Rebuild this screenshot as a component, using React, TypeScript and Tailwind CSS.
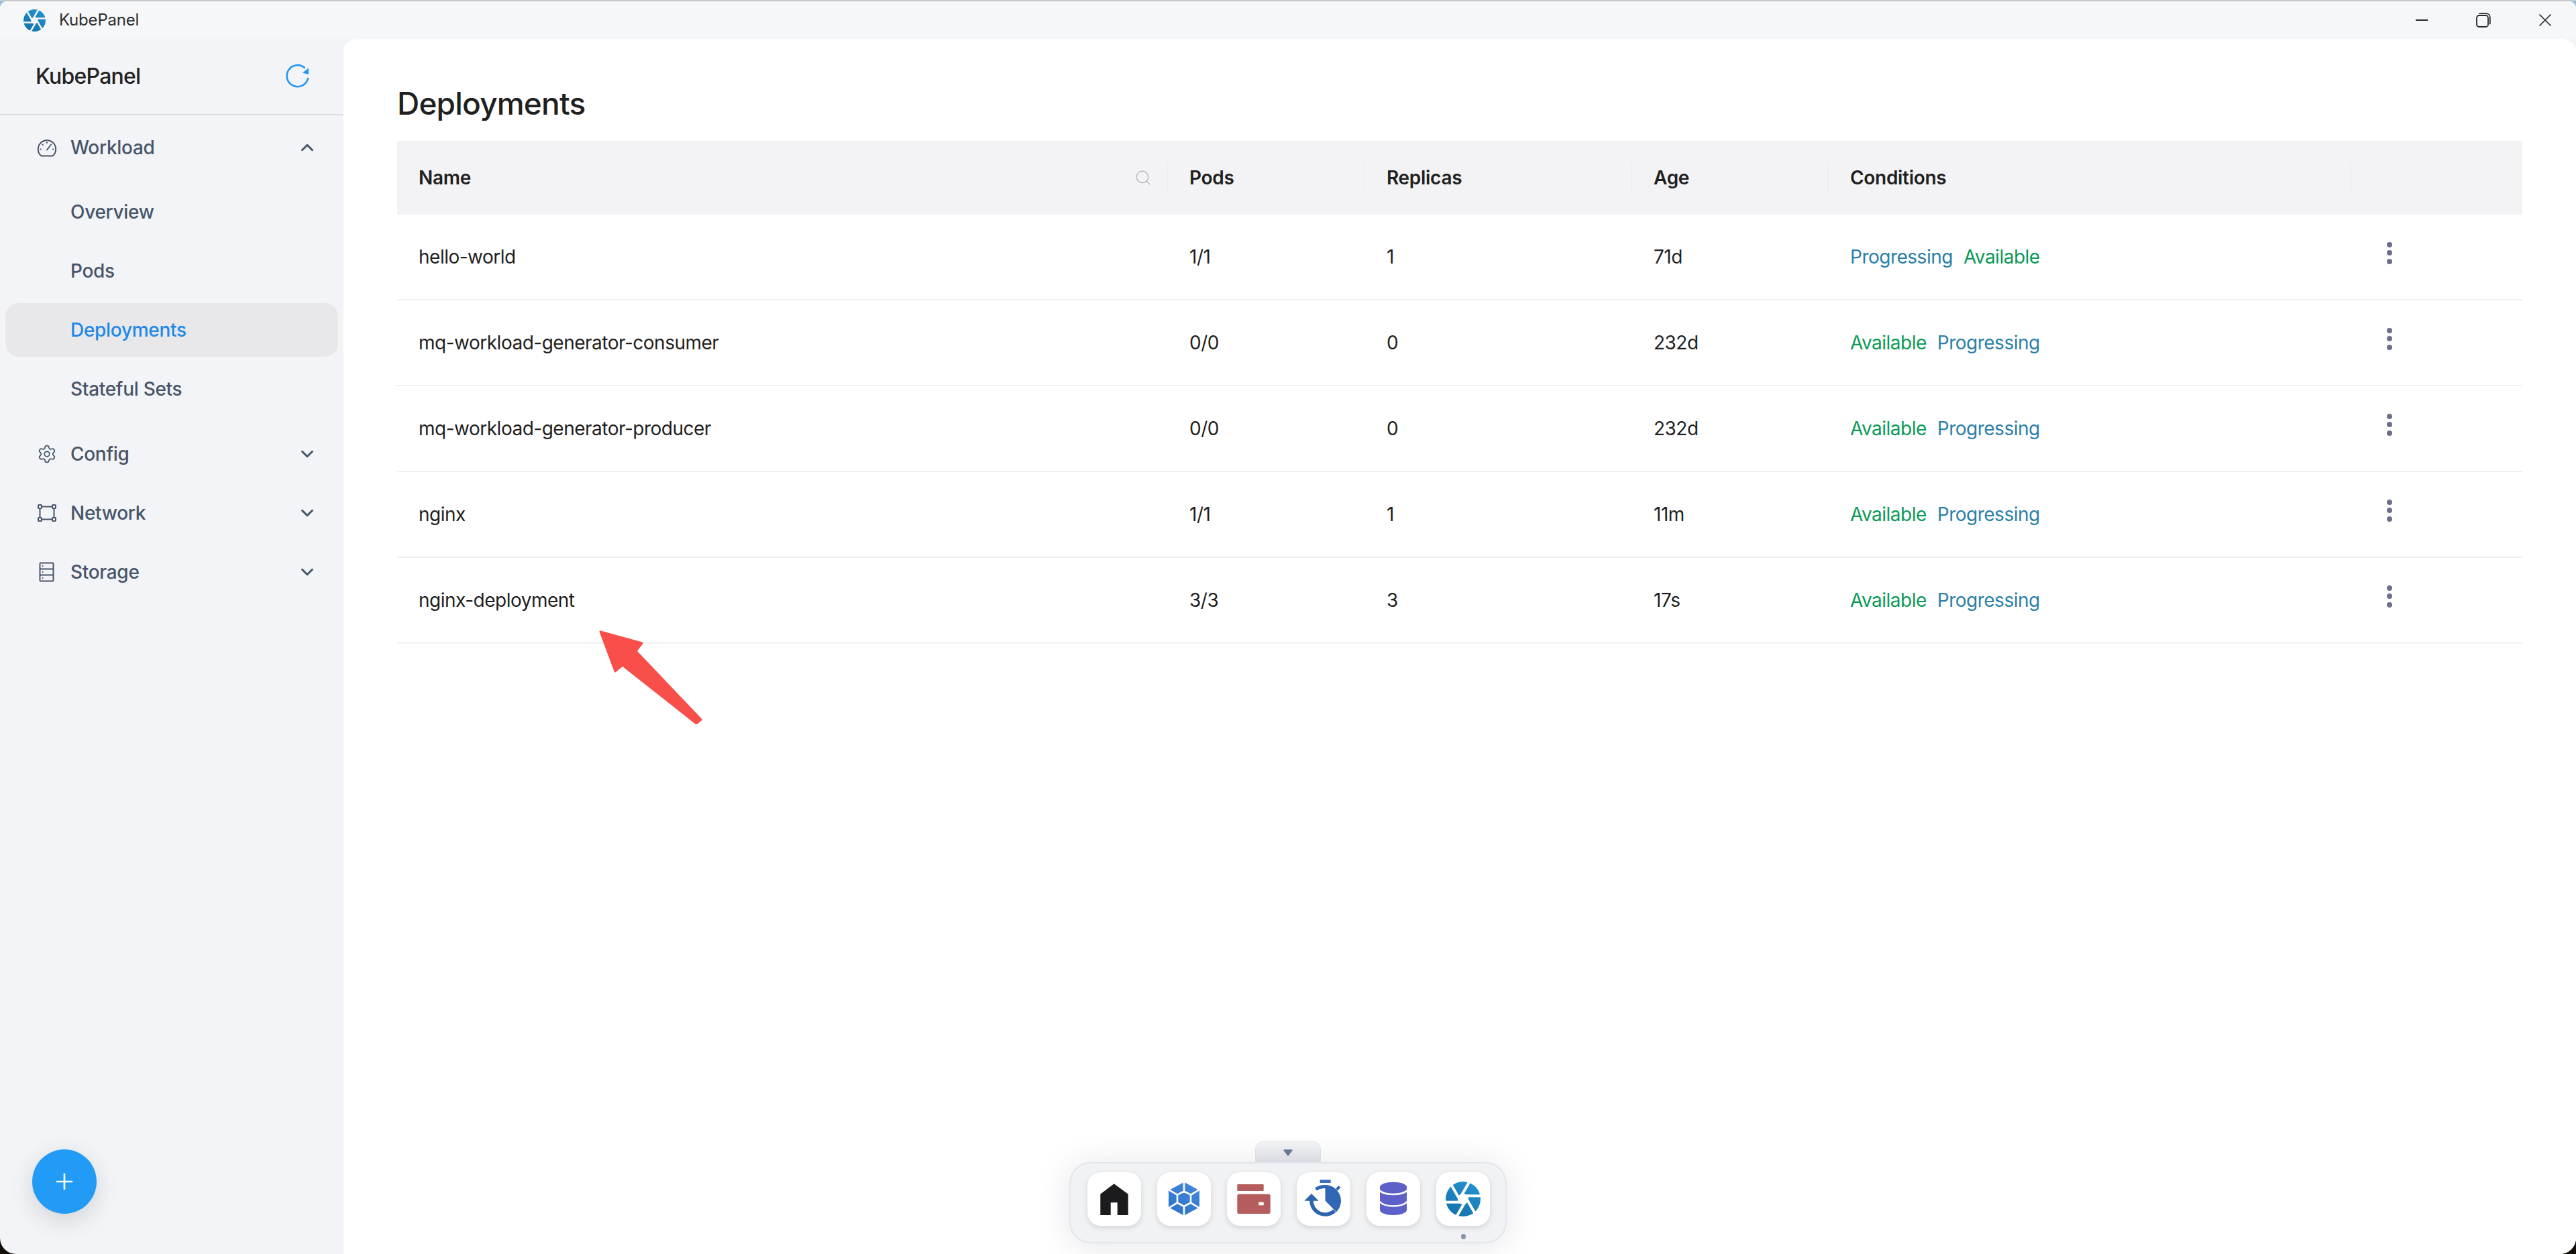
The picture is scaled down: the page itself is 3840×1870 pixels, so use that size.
import React from "react";
import { ChevronDown, ChevronUp, Plus, Search, Settings, X } from "lucide-react";

const rows = [
  { name: "hello-world", pods: "1/1", replicas: "1", age: "71d", conditions: ["Progressing", "Available"] },
  { name: "mq-workload-generator-consumer", pods: "0/0", replicas: "0", age: "232d", conditions: ["Available", "Progressing"] },
  { name: "mq-workload-generator-producer", pods: "0/0", replicas: "0", age: "232d", conditions: ["Available", "Progressing"] },
  { name: "nginx", pods: "1/1", replicas: "1", age: "11m", conditions: ["Available", "Progressing"] },
  { name: "nginx-deployment", pods: "3/3", replicas: "3", age: "17s", conditions: ["Available", "Progressing"] },
];

const gridCols = "grid grid-cols-[1149px_294px_398px_293px_779px_255px]";

// logo of the app, six blades cut by gap lines
const Aperture = ({ size, gap, id }: { size: number; gap: string; id: string }) => (
  <svg width={size} height={size} viewBox="0 0 52 52">
    <defs>
      <linearGradient id={id} x1="0.8" y1="0" x2="0.2" y2="1">
        <stop offset="0" stopColor="#2592d0" />
        <stop offset="1" stopColor="#1471ab" />
      </linearGradient>
    </defs>
    <circle cx="26" cy="26" r="26" fill={`url(#${id})`} />
    <circle cx="26" cy="26" r="8" fill={gap} />
    {[0, 60, 120, 180, 240, 300].map((deg) => (
      <line
        key={deg}
        x1="-2"
        y1="30.7"
        x2="29"
        y2="30.7"
        stroke={gap}
        strokeWidth="4"
        transform={`rotate(${deg} 26 26)`}
      />
    ))}
  </svg>
);

const GaugeIcon = () => (
  <svg width="30" height="30" viewBox="0 0 30 30" fill="none" stroke="#475569" strokeWidth="2" strokeLinecap="round">
    <path d="M6.5 27.5h17c3-2.4 4.7-6 4.7-10 0-7.3-5.9-13.2-13.2-13.2S1.8 10.200 1.800 17.500c0 4 1.700 7.600 4.700 10z" />
    <path d="M15 18.500l5-6.500" />
    <path d="M15 7.500v.5M8.500 10.500l.4.4M5.500 17.500h.5M24 17.500h.5M21.200 10.500l-.2.2" />
  </svg>
);

const NetworkIcon = () => (
  <svg width="30" height="30" viewBox="0 0 30 30" fill="none" stroke="#475569" strokeWidth="2">
    <rect x="2" y="3" width="5" height="5" rx="1" />
    <rect x="23" y="3" width="5" height="5" rx="1" />
    <rect x="2" y="22" width="5" height="5" rx="1" />
    <rect x="23" y="22" width="5" height="5" rx="1" />
    <path d="M7 5.500h16M7 24.500h16M4.500 8v14M25.500 8v14" />
  </svg>
);

const StorageIcon = () => (
  <svg width="30" height="30" viewBox="0 0 30 30" fill="none" stroke="#475569" strokeWidth="2">
    <rect x="4.500" y="1.500" width="20" height="27" rx="1" />
    <path d="M4.500 10.500h20M4.500 19.500h20" />
    <path d="M8 6h1.500M8 15h1.500M8 24h1.500" />
  </svg>
);

const RefreshIcon = () => (
  <svg width="36" height="38" viewBox="0 0 36 38" fill="none">
    <path d="M33.300 21A16 16 0 1 1 28.500 6.500" stroke="#2196f3" strokeWidth="2.600" />
    <path d="M34 6.500v9.500l-9-2.500z" fill="#2196f3" />
  </svg>
);

const NavGroup = ({ icon, label, open }: { icon: React.ReactNode; label: string; open?: boolean }) => (
  <div className="flex h-[80px] items-center pl-[47px] pr-[31px] text-[28px] font-medium tracking-[-0.3px] text-[#475569]">
    <span className="flex w-[30px] justify-center">{icon}</span>
    <span className="ml-[20px] flex-1">{label}</span>
    {open ? (
      <ChevronUp size={30} strokeWidth={2.4} />
    ) : (
      <ChevronDown size={30} strokeWidth={2.4} />
    )}
  </div>
);

const NavItem = ({ label, active }: { label: string; active?: boolean }) => (
  <div
    className={
      active
        ? "flex h-[80px] items-center rounded-[20px] bg-[#e8e8eb] pl-[97px] text-[28px] font-medium tracking-[-0.3px] text-[#1e88e5]"
        : "flex h-[80px] items-center rounded-[20px] pl-[97px] text-[28px] font-medium tracking-[-0.3px] text-[#475569]"
    }
  >
    {label}
  </div>
);

const HeaderCell = ({ label, divider = true, search }: { label?: string; divider?: boolean; search?: boolean }) => (
  <div className="flex items-center">
    <span className="flex-1 pl-[32px]">{label}</span>
    {search && <Search size={26} strokeWidth={1.300} className="mr-[22px] text-[#b8b8bb]" />}
    {divider && <span className="h-[44px] w-[2px] bg-[#eeeef0]" />}
  </div>
);

const Kebab = () => (
  <div className="flex flex-col items-center gap-[4.500px] pl-[45px] pb-[12px] w-[69px]">
    <span className="h-[8px] w-[8px] rounded-full bg-[#6b7089]" />
    <span className="h-[8px] w-[8px] rounded-full bg-[#6b7089]" />
    <span className="h-[8px] w-[8px] rounded-full bg-[#6b7089]" />
  </div>
);

const Tile = ({ children, active }: { children: React.ReactNode; active?: boolean }) => (
  <div className="flex flex-col items-center">
    <div className="flex h-[80px] w-[80px] items-center justify-center rounded-[20px] bg-white shadow-[0_3px_8px_rgba(0,0,0,0.13)]">
      {children}
    </div>
    {active && <span className="mt-[12px] h-[8px] w-[7px] rounded-full bg-[#8a94a8]" />}
  </div>
);

const Dock = () => (
  <div className="absolute bottom-[16px] left-1/2 flex -translate-x-1/2 flex-col items-center">
    <div className="flex h-[31px] w-[98px] justify-center rounded-t-[12px] border border-b-0 border-[#e6e8ec] bg-gradient-to-b from-[#f3f4f6] to-[#e3e5ea] pt-[11px]">
      <svg width="14" height="10" viewBox="0 0 14 10">
        <path d="M1 1h12L7 9z" fill="#6b7a90" stroke="#6b7a90" strokeWidth="1.500" strokeLinejoin="round" />
      </svg>
    </div>
    <div className="flex h-[121px] w-[652px] gap-[24px] rounded-[32px] border-2 border-[#e3e5ec] bg-[#f1f2f4] pl-[25px] pt-[13px] shadow-[0_4px_50px_rgba(30,40,70,0.12)]">
      <Tile>
        <svg width="80" height="80" viewBox="0 0 80 80">
          <path d="M39.700 17.300L60.700 32.700V64H44.700V45.300H34.700V64H19.300V32.700z" fill="#1b1b1d" />
        </svg>
      </Tile>
      <Tile>
        <svg width="80" height="80" viewBox="0 0 80 80">
          <defs>
            <linearGradient id="gem" x1="0.8" y1="0" x2="0.2" y2="1">
              <stop offset="0" stopColor="#4487d9" />
              <stop offset="1" stopColor="#2c74cb" />
            </linearGradient>
          </defs>
          <path d="M40 14.700L63 27.200V52.200L40 64.700L17 52.200V27.200z" fill="url(#gem)" />
          <path
            d="M40 28.500L50 33.700V45.700L40 51L30 45.700V33.700z M40 12V28.500 M40 51V67 M63 26L50 33.700 M17 26L30 33.700 M63 53.500L50 45.700 M17 53.500L30 45.700"
            fill="none"
            stroke="#fff"
            strokeWidth="2.600"
          />
        </svg>
      </Tile>
      <Tile>
        <svg width="80" height="80" viewBox="0 0 80 80" fill="#b55d5d">
          <rect x="15.300" y="18" width="39.400" height="10" rx="1" />
          <rect x="15.300" y="32.700" width="49.400" height="29.300" rx="2.500" />
          <rect x="47.300" y="44.700" width="7.400" height="4.600" fill="#fff" />
        </svg>
      </Tile>
      <Tile>
        <svg width="80" height="80" viewBox="0 0 80 80">
          <rect x="34.700" y="11.300" width="16" height="4.700" fill="#3a70c0" />
          <path d="M42.500 19A23.500 23.500 0 0 1 59 59.200L42.500 42.500z" fill="#3166b4" />
          <path d="M56.500 57.500A20.500 20.500 0 0 1 22 42" fill="none" stroke="#2e63ad" strokeWidth="5.500" />
          <path d="M11.300 42.700H32.700L22 32z" fill="#2e63ad" />
          <path d="M28.500 25.500A23 23 0 0 1 43 21.500" fill="none" stroke="#3166b4" strokeWidth="5" />
          <path d="M59.500 26L64 21.500" fill="none" stroke="#3166b4" strokeWidth="4" />
        </svg>
      </Tile>
      <Tile>
        <svg width="80" height="80" viewBox="0 0 80 80">
          <path d="M20 22C20 17.800 29 14.700 40 14.700S60 17.800 60 22V56.500C60 60.700 51 64 40 64S20 60.700 20 56.500z" fill="#5c60c8" />
          <path d="M19 27C23 31 31 33 40 33S57 31 61 27M19 43.500C23 48 31 50.500 40 50.500S57 48 61 43.500" fill="none" stroke="#fff" strokeWidth="2.600" />
        </svg>
      </Tile>
      <Tile active>
        <Aperture size={52} gap="#ffffff" id="dock-logo" />
      </Tile>
    </div>
  </div>
);

export default function App() {
  return (
    <div className="relative h-[1870px] w-[3840px] overflow-hidden border-t-2 border-[#c8cacc] bg-[linear-gradient(to_bottom,#8fbfe8_50%,#141008_50%)] [font-family:Inter,sans-serif]">
      <div className="flex h-full flex-col overflow-hidden rounded-t-[10px] rounded-b-[24px] bg-[#f3f4f7]">
        {/* Title bar */}
        <div className="flex h-[56px] items-center bg-[#f6f7f9] pl-[35px] text-[24px] tracking-[-0.2px] text-[#2e2e2e]">
          <Aperture size={33} gap="#f6f7f9" id="title-logo" />
          <span className="ml-[20px] flex-1">KubePanel</span>
          <svg width="20" height="4" viewBox="0 0 20 4" className="mr-[71px]">
            <path d="M1 2h18" stroke="#2a2a2a" strokeWidth="2" />
          </svg>
          <svg width="22" height="22" viewBox="0 0 22 22" fill="none" stroke="#2a2a2a" strokeWidth="1.800" className="mr-[65px]">
            <rect x="1" y="4" width="17" height="17" rx="3.500" />
            <path d="M4.500 1.200h10.500c3 0 5.800 2 5.800 5.500v10.500" />
          </svg>
          <X size={32} strokeWidth={1.300} className="mr-[30px] text-[#2a2a2a]" />
        </div>

        <div className="flex flex-1">
          {/* Sidebar */}
          <div className="flex w-[512px] flex-col">
            <div className="flex h-[114px] items-center justify-between border-b-2 border-[#dcdce0] pl-[53px] pr-[50px]">
              <span className="text-[32px] font-medium tracking-[-0.8px] text-[#222]">KubePanel</span>
              <RefreshIcon />
            </div>
            <div className="flex flex-col px-[8px] pt-[8px]">
              <NavGroup icon={<GaugeIcon />} label="Workload" open />
              <div className="mt-[16px] flex flex-col gap-[8px]">
                <NavItem label="Overview" />
                <NavItem label="Pods" />
                <NavItem label="Deployments" active />
                <NavItem label="Stateful Sets" />
              </div>
              <div className="mt-[17px] flex flex-col gap-[8px]">
                <NavGroup icon={<Settings size={32} strokeWidth={1.400} />} label="Config" />
                <NavGroup icon={<NetworkIcon />} label="Network" />
                <NavGroup icon={<StorageIcon />} label="Storage" />
              </div>
            </div>
            <button className="mb-[60px] ml-[48px] mt-auto flex h-[96px] w-[96px] items-center justify-center rounded-full bg-[#219bf5] text-white shadow-[0_10px_36px_rgba(0,0,0,0.14)]">
              <Plus size={38} strokeWidth={1.700} />
            </button>
          </div>

          {/* Main */}
          <div className="flex-1 rounded-t-[20px] bg-white pl-[80px] pr-[80px] pt-[66px] text-[#1f1f1f]">
            <h1 className="mb-[26px] text-[46px] font-medium leading-[60px] tracking-[-0.8px]">Deployments</h1>
            <div className={`${gridCols} h-[110px] bg-[#f3f3f5] text-[28px] font-semibold tracking-[-0.3px]`}>
              <HeaderCell label="Name" search />
              <HeaderCell label="Pods" />
              <HeaderCell label="Replicas" />
              <HeaderCell label="Age" />
              <HeaderCell label="Conditions" />
              <HeaderCell divider={false} />
            </div>
            {rows.map((row) => (
              <div key={row.name} className={`${gridCols} h-[128px] items-center border-b-2 border-[#f0f0f2] text-[28px] tracking-[-0.5px]`}>
                <span className="pl-[32px]">{row.name}</span>
                <span className="pl-[32px]">{row.pods}</span>
                <span className="pl-[32px]">{row.replicas}</span>
                <span className="pl-[32px]">{row.age}</span>
                <span className="flex gap-[16px] pl-[32px]">
                  {row.conditions.map((c) => (
                    <span key={c} className={c === "Available" ? "text-[#0a9a55]" : "text-[#2a7fa8]"}>
                      {c}
                    </span>
                  ))}
                </span>
                <Kebab />
              </div>
            ))}
          </div>
        </div>
      </div>

      {/* Annotation arrow */}
      <svg width="170" height="150" viewBox="0 0 170 150" className="absolute left-[880px] top-[928px]">
        <path
          d="M15 12L77 29L68 41L165 143L158 149L48 62L37 71z"
          fill="#f94f4b"
          stroke="#f94f4b"
          strokeWidth="3"
          strokeLinejoin="round"
        />
      </svg>

      <Dock />
    </div>
  );
}
